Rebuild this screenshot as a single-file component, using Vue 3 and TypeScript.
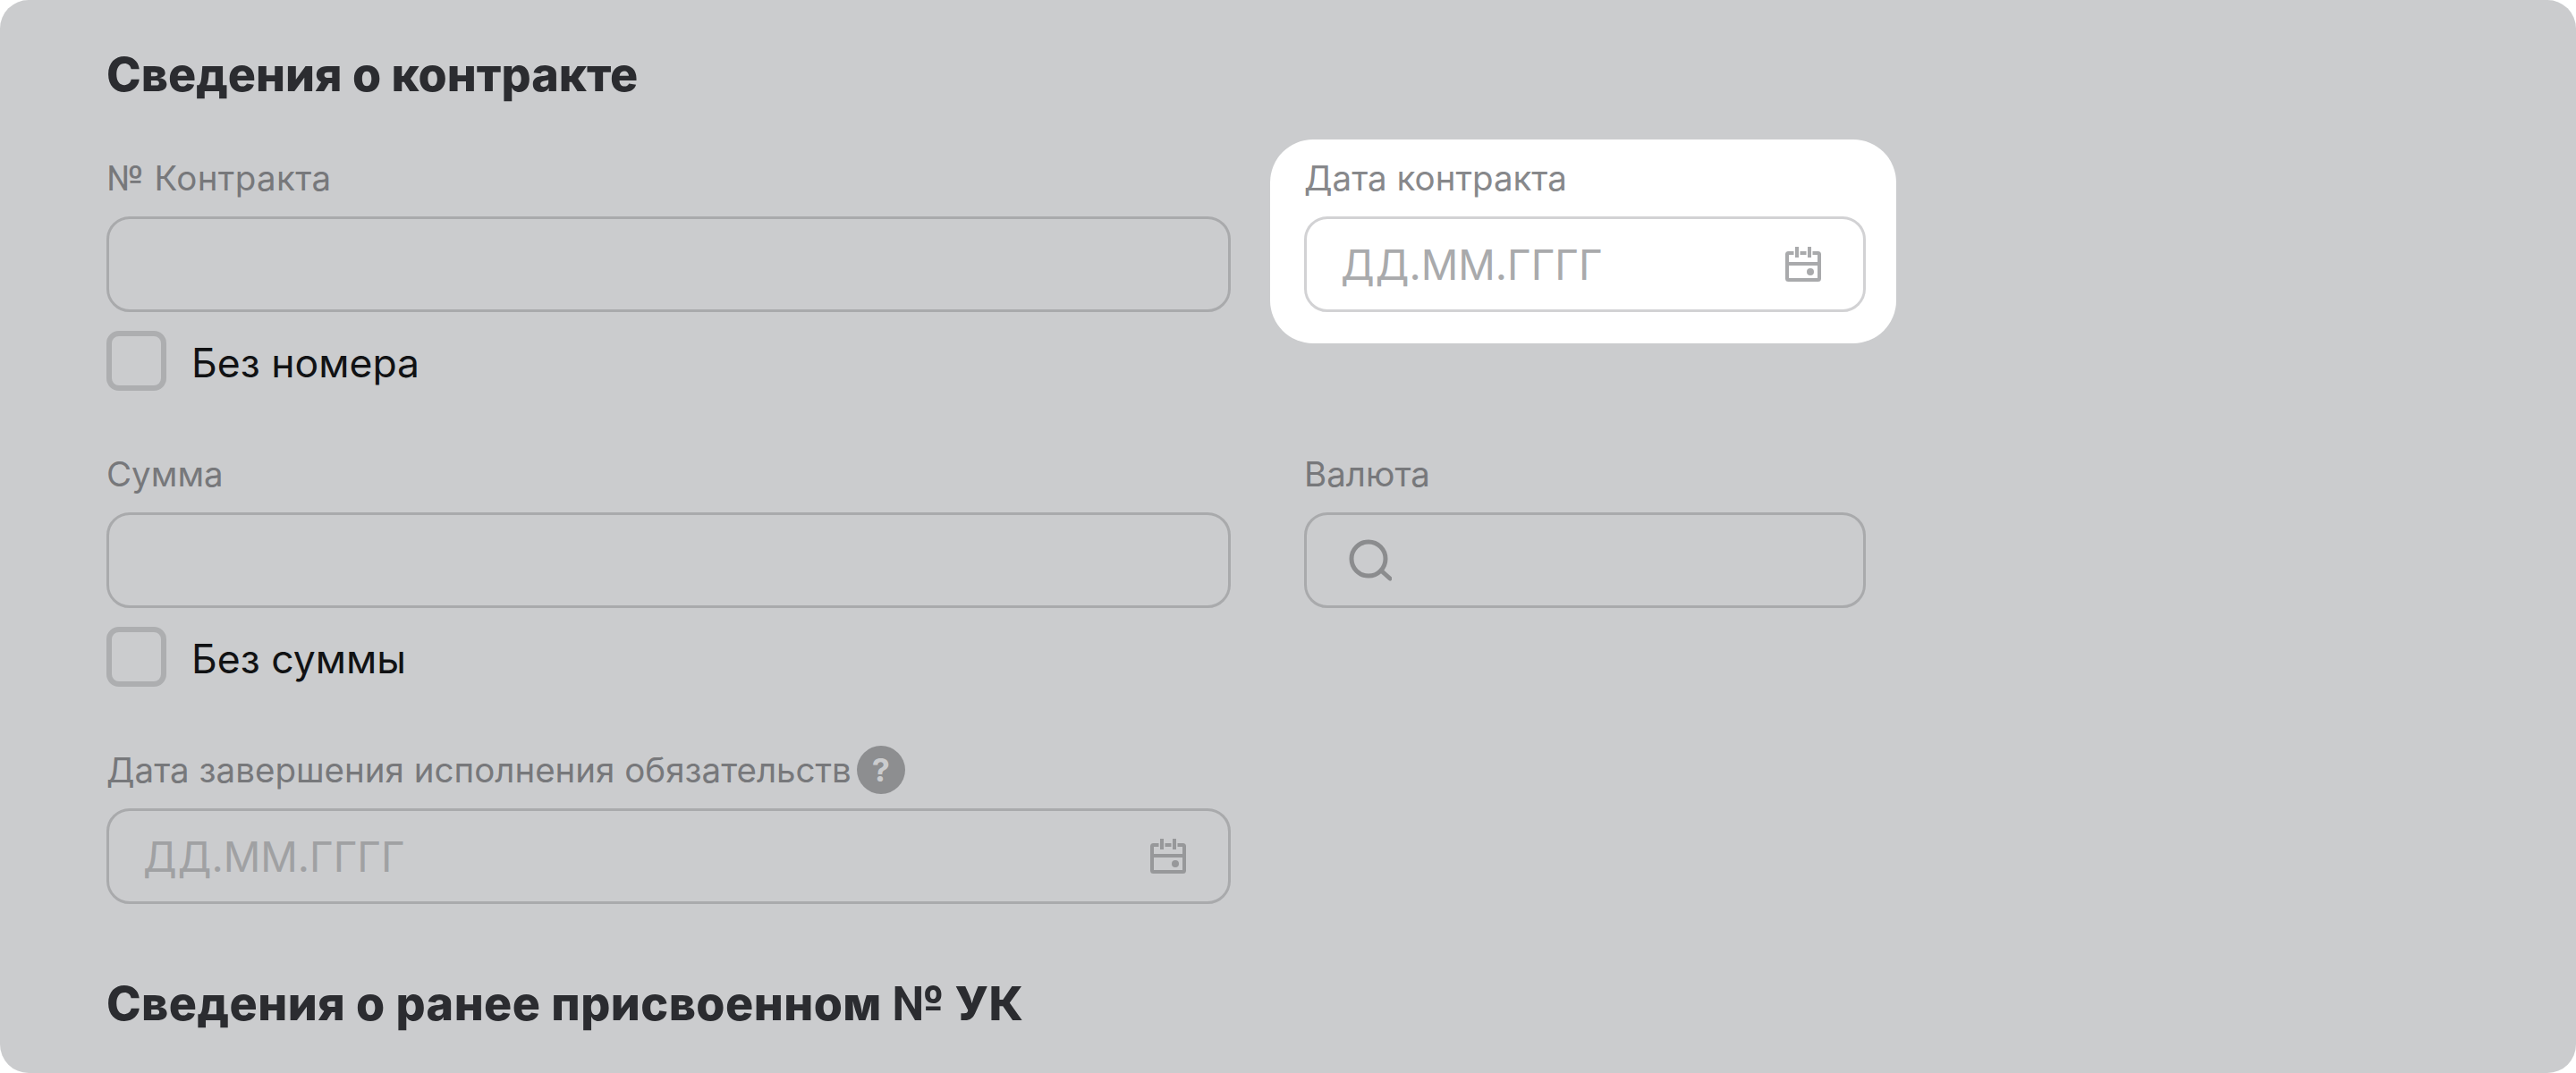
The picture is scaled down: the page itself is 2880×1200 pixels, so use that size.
<template>
    <div class="page">
        <section class="panel">
            <h2 class="title">Сведения о контракте</h2>

            <div class="rows">
                <div class="row">
                    <div class="field wide">
                        <div class="label"><span class="num">№ Контракта</span></div>
                        <div class="box"></div>
                        <label class="check">
                            <span class="check-box"></span>
                            <span class="check-text">Без номера</span>
                        </label>
                    </div>
                    <div class="field narrow focused">
                        <div class="label">Дата контракта</div>
                        <div class="box">
                            <span class="placeholder">ДД.ММ.ГГГГ</span>
                            <svg class="cal" viewBox="0 0 40 40" fill="none">
                                <path
                                    d="M9.500 8H3.500a1.500 1.500 0 0 0-1.500 1.500V36.500A1.500 1.500 0 0 0 3.500 38h33a1.500 1.500 0 0 0 1.500-1.500V9.500A1.500 1.500 0 0 0 36.500 8H30.500M16.500 8h7M2 20h36M13 1v12M27 1v12"
                                    stroke="currentColor"
                                    stroke-width="4"
                                />
                                <circle cx="28" cy="29" r="4" fill="currentColor" />
                            </svg>
                        </div>
                    </div>
                </div>

                <div class="row">
                    <div class="field wide">
                        <div class="label">Сумма</div>
                        <div class="box"></div>
                        <label class="check">
                            <span class="check-box"></span>
                            <span class="check-text">Без суммы</span>
                        </label>
                    </div>
                    <div class="field narrow">
                        <div class="label">Валюта</div>
                        <div class="box">
                            <svg class="search" viewBox="0 0 48 48" fill="none">
                                <circle cx="22" cy="22" r="19" stroke="currentColor" stroke-width="5" />
                                <path d="M36 35l10 9" stroke="currentColor" stroke-width="5" stroke-linecap="round" />
                            </svg>
                        </div>
                    </div>
                </div>

                <div class="row">
                    <div class="field wide">
                        <div class="label">
                            Дата завершения исполнения обязательств
                            <span class="help">?</span>
                        </div>
                        <div class="box">
                            <span class="placeholder">ДД.ММ.ГГГГ</span>
                            <svg class="cal" viewBox="0 0 40 40" fill="none">
                                <path
                                    d="M9.500 8H3.500a1.500 1.500 0 0 0-1.500 1.500V36.500A1.500 1.500 0 0 0 3.500 38h33a1.500 1.500 0 0 0 1.500-1.500V9.500A1.500 1.500 0 0 0 36.500 8H30.500M16.500 8h7M2 20h36M13 1v12M27 1v12"
                                    stroke="currentColor"
                                    stroke-width="4"
                                />
                                <circle cx="28" cy="29" r="4" fill="currentColor" />
                            </svg>
                        </div>
                    </div>
                </div>
            </div>

            <h2 class="title second">Сведения о ранее присвоенном № УК</h2>
        </section>
    </div>
</template>

<script setup lang="ts">
</script>

<style scoped>
.page {
    width: 2880px;
    height: 1200px;
    overflow: hidden;
    background: #ffffff;
    font-family: Inter, "Liberation Sans", sans-serif;
}

.panel {
    height: 1200px;
    box-sizing: border-box;
    padding: 52px 0 0 119px;
    background: #cbccce;
    border-radius: 32px;
}

.title {
    margin: 0;
    font-size: 52px;
    line-height: 64px;
    font-weight: 800;
    color: #2b2c30;
}

.title.second {
    margin-top: 80px;
    letter-spacing: 0.450px;
}

.rows {
    display: flex;
    flex-direction: column;
    gap: 70px;
    margin-top: 60px;
}

.row {
    display: flex;
    gap: 82px;
}

.field.wide {
    width: 1257px;
}

.field.narrow {
    width: 628px;
}

.label {
    display: flex;
    align-items: center;
    gap: 6px;
    height: 46px;
    margin-bottom: 20px;
    font-size: 38.500px;
    line-height: 46px;
    color: #77787b;
}

.num {
    letter-spacing: 0.350px;
}

.box {
    display: flex;
    align-items: center;
    justify-content: space-between;
    box-sizing: border-box;
    height: 107px;
    padding: 0 47px 0 38px;
    border: 3px solid #a9aaac;
    border-radius: 26px;
}

.placeholder {
    font-size: 46px;
    color: #a0a1a3;
}

.cal {
    width: 40px;
    height: 40px;
    margin-bottom: 2px;
    color: #97989a;
}

.search {
    width: 48px;
    height: 48px;
    margin-left: 9px;
    color: #8b8c8e;
}

.check {
    display: flex;
    align-items: center;
    gap: 28px;
    margin-top: 21px;
}

.check-box {
    box-sizing: border-box;
    width: 67px;
    height: 67px;
    border: 6px solid #adaeb0;
    border-radius: 14px;
}

.check-text {
    padding-top: 4px;
    font-size: 44.500px;
    line-height: 52px;
    color: #111214;
}

.help {
    display: inline-flex;
    align-items: center;
    justify-content: center;
    width: 54px;
    height: 54px;
    border-radius: 50%;
    background: #8d8e90;
    font-size: 36px;
    font-weight: 700;
    color: #cbccce;
}

.focused {
    margin: -20px -34px -35px -38px;
    padding: 20px 34px 35px 38px;
    align-self: flex-start;
    background: #ffffff;
    border-radius: 48px;
}

.focused .label {
    color: #87888b;
}

.focused .box {
    border-color: #d2d2d4;
}

.focused .placeholder,
.focused .cal {
    color: #a9aaac;
}
</style>
